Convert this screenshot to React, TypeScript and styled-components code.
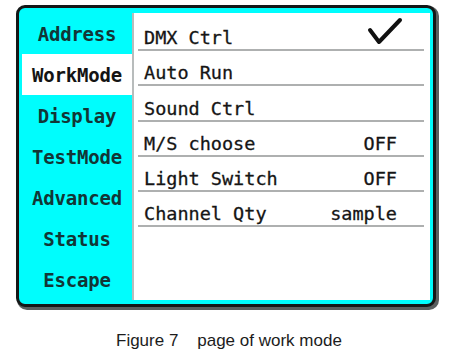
import React from 'react';
import styled, { createGlobalStyle } from 'styled-components';

const GlobalStyle = createGlobalStyle`
  html, body {
    margin: 0;
    padding: 0;
    background: #ffffff;
  }
`

const Page = styled.div`
  width: 451px;
  height: 363px;
  padding: 5px 0 0 16px;
  box-sizing: border-box;
`

const Screen = styled.div`
  width: 420px;
  height: 302px;
  box-sizing: border-box;
  display: flex;
  padding: 5px 3px 4px 3px;
  background: #00fdfd;
  border: 3px solid #141818;
  border-radius: 9px;
  box-shadow: 2px 2px 0 1px #5a5f5f;
`

const Sidebar = styled.div`
  width: 110px;
  display: flex;
  flex-direction: column;
`

const Tab = styled.div<{ $active?: boolean }>`
  height: 41px;
  display: flex;
  align-items: center;
  justify-content: center;
  background: ${p => (p.$active ? '#ffffff' : 'transparent')};
  color: ${p => (p.$active ? '#141414' : '#123636')};
  font-family: 'DejaVu Sans Mono', 'Liberation Mono', monospace;
  font-weight: bold;
  font-size: 19px;
  letter-spacing: -0.2px;
`

const Panel = styled.div`
  flex: 1;
  background: #ffffff;
  border-left: 2px solid #b8bcbc;
  padding: 3px 6px 0 4px;
  display: flex;
  flex-direction: column;
`

const Row = styled.div`
  height: 33.2px;
  box-sizing: content-box;
  display: flex;
  align-items: flex-end;
  justify-content: space-between;
  padding: 0 27px 0 6px;
  border-bottom: 2px solid #aeb0b0;
  font-family: 'DejaVu Sans Mono', 'Liberation Mono', monospace;
  font-size: 18.5px;
  line-height: 22px;
  color: #151515;
  -webkit-text-stroke: 0.3px #151515;
`

const Value = styled.span`
  display: flex;
  align-items: center;
`

const Check = styled.svg`
  width: 36px;
  height: 30px;
  margin-right: -6px;
  margin-bottom: 2px;
`

const Caption = styled.div`
  margin-top: 24px;
  padding-left: 100px;
  font-family: 'Liberation Sans', Arial, sans-serif;
  font-size: 17px;
  color: #1c1c1c;
  white-space: pre;
`

const tabs = ['Address', 'WorkMode', 'Display', 'TestMode', 'Advanced', 'Status', 'Escape'];

const rows: { label: string; value?: string; check?: boolean }[] = [
  { label: 'DMX Ctrl', check: true },
  { label: 'Auto Run' },
  { label: 'Sound Ctrl' },
  { label: 'M/S choose', value: 'OFF' },
  { label: 'Light Switch', value: 'OFF' },
  { label: 'Channel Qty', value: 'sample' },
];

export default function App() {
  return (
    <Page>
      <GlobalStyle />
      <Screen>
        <Sidebar>
          {tabs.map(t => (
            <Tab key={t} $active={t === 'WorkMode'}>{t}</Tab>
          ))}
        </Sidebar>
        <Panel>
          {rows.map(r => (
            <Row key={r.label}>
              <span>{r.label}</span>
              <Value>
                {r.check ? (
                  <Check viewBox="0 0 36 30">
                    <path d="M3 13 L12 25 L33 3" fill="none" stroke="#111" strokeWidth="4" strokeLinecap="round" strokeLinejoin="round" />
                  </Check>
                ) : r.value}
              </Value>
            </Row>
          ))}
        </Panel>
      </Screen>
      <Caption>{'Figure 7    page of work mode'}</Caption>
    </Page>
  );
}
